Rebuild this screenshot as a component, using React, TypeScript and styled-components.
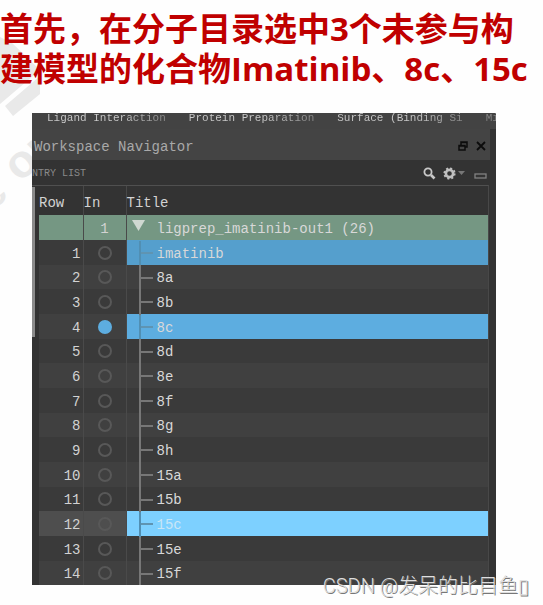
import React, { useState } from "react";
import styled, { createGlobalStyle } from "styled-components";

const Global = createGlobalStyle`
  * { box-sizing: border-box; }
  body { margin: 0; background: #fefefe; }
`;

const mono = `"Liberation Mono", monospace`;

const Page = styled.main`
  position: relative;
  min-height: 100vh;
  overflow: hidden;
`;

const Heading = styled.h1`
  position: relative;
  margin: 0;
  padding: 9px 0 24px;
  font: 700 33px/40px "Open Sans", "Noto Sans CJK SC", sans-serif;
  color: #c00000;
  white-space: nowrap;
`;

const Backdrop = styled.svg`
  position: absolute;
  left: 0;
  top: 0;
  fill: #e9e9e9;
`;

const Panel = styled.section`
  position: relative;
  margin: 0 47px 0 32px;
  background: #333;
  font-family: ${mono};
  overflow: hidden;
`;

const ToolStrip = styled.nav`
  display: flex;
  gap: 23px;
  height: 16px;
  padding-left: 15px;
  background: #434343;
  overflow: hidden;
`;

const Tool = styled.button`
  flex: none;
  height: 12px;
  margin-top: -1px;
  padding: 0;
  border: 0;
  background: linear-gradient(90deg, #ccc 60%, #858585);
  background-clip: text;
  color: transparent;
  font: 11px/12px ${mono};
  &:last-child { background: #858585; background-clip: text; }
`;

const TitleBar = styled.header`
  display: flex;
  align-items: center;
  gap: 8px;
  height: 31px;
  margin-right: 6px;
  padding: 2px 4px 0 2px;
  background: #444;
`;

const PanelTitle = styled.h2`
  flex: 1;
  margin: 0;
  padding-top: 2px;
  font: 14px/20px ${mono};
  color: #a9a9a9;
`;

const IconButton = styled.button`
  display: flex;
  padding: 0;
  border: 0;
  background: none;
`;

const ListBar = styled.div`
  display: flex;
  align-items: center;
  gap: 7px;
  height: 25px;
  padding: 2px 9px 0 0;
`;

const ListLabel = styled.h3`
  flex: 1;
  margin: 0;
  font: 10px/16px ${mono};
  color: #8a8a8a;
`;

const ListBody = styled.div`
  position: relative;
  margin-right: 7px;
  padding-left: 7px;
  border-top: 1px solid #505050;
  border-right: 1px solid #484848;
`;

const ScrollThumb = styled.div`
  position: absolute;
  left: 0;
  top: 1px;
  width: 3px;
  height: 150px;
  background: #8b8b8b;
`;

const Table = styled.table`
  width: 100%;
  table-layout: fixed;
  border-collapse: collapse;
  color: #d2d2d2;
  font: 14px/20px ${mono};
`;

const HeadCell = styled.th<{ $width?: number }>`
  width: ${(p) => (p.$width ? `${p.$width}px` : "auto")};
  height: 29px;
  padding: 4px 0 0;
  border-left: 1px solid #484848;
  font-weight: 400;
  text-align: left;
  &:first-child { border-left: 0; }
`;

type Tone = "group" | "soft" | "picked" | "current" | "plain";
const titleFill: Record<Tone, string> = {
  group: "#759783",
  soft: "#559fcd",
  picked: "#5dade0",
  current: "#7dd0ff",
  plain: "transparent",
};

const rowFill = (tone: Tone, base: string) =>
  tone === "group" ? "#759783" : tone === "current" ? "#4e4e4e" : base;

const Row = styled.tr<{ $tone: Tone }>`
  height: 25px;
  background: ${(p) => rowFill(p.$tone, "#3a3a3a")};
  &:nth-child(3n) { height: 24px; }
  &:nth-child(odd) { background: ${(p) => rowFill(p.$tone, "#404040")}; }
`;

const Cell = styled.td`
  padding: 0;
  border-left: 1px solid #4a4a4a;
  &:first-child { border-left: 0; }
`;

const NumberCell = styled(Cell)`
  padding: 2px 2px 0 0;
  text-align: right;
`;

const MarkCell = styled(Cell)`
  text-align: center;
`;

const Count = styled.span`
  display: block;
  padding-top: 2px;
`;

const TitleCell = styled(Cell)<{ $tone: Tone }>`
  background: ${(p) => titleFill[p.$tone]};
  color: ${(p) => (p.$tone === "current" ? "#c9e6f6" : "#d8d8d8")};
`;

const Entry = styled.div`
  display: flex;
  align-items: center;
  height: 24px;
  white-space: pre;
`;

const Label = styled.span`
  padding-top: 2px;
`;

const Branch = styled.span<{ $dim: boolean }>`
  align-self: flex-start;
  display: flex;
  align-items: center;
  width: 14px;
  height: 25px;
  margin: 0 4px 0 12px;
  border-left: 2px solid ${(p) => (p.$dim ? "#518fb3" : "#777")};
  &::after {
    content: "";
    flex: 1;
    height: 2px;
    background: ${(p) => (p.$dim ? "#5f94b2" : "#777")};
  }
`;

const Toggle = styled.button`
  display: flex;
  width: 24px;
  margin: 0 1px 4px 5px;
  padding: 0;
  border: 0;
  background: none;
`;

const Include = styled.input`
  appearance: none;
  display: block;
  width: 14px;
  height: 14px;
  margin: 0 auto;
  border: 2px solid #585858;
  border-radius: 50%;
  &:checked { background: #5dade0; border-color: #5dade0; }
`;

const Credit = styled.p`
  position: absolute;
  right: 14px;
  top: 574px;
  margin: 0;
  font: 300 20px/24px Roboto, "Noto Sans CJK SC", sans-serif;
  color: #dedede;
  text-shadow: 1px 1px 0 #777;
  white-space: nowrap;
`;

const tools = ["Ligand Interaction", "Protein Preparation", "Surface (Binding Si", "Mi"];
const entries: { name: string; tone: Tone }[] = [
  "imatinib", "8a", "8b", "8c", "8d", "8e", "8f", "8g", "8h", "15a", "15b", "15c", "15e", "15f",
].map((name) => ({
  name,
  tone: name === "imatinib" ? "soft" : name === "8c" ? "picked" : name === "15c" ? "current" : "plain",
}));

export default function App() {
  const [included, setIncluded] = useState("8c");
  return (
    <Page>
      <Global />
      <Backdrop width="110" height="230" aria-hidden="true">
        <path d="M0 37L12 43L40 70L0 104ZM5 106L40 76V94L13 116Z" />
        <text transform="translate(20 183) rotate(-42)" fontFamily="Liberation Sans" fontWeight="700" fontSize="46">om</text>
        <text transform="translate(-7 211) rotate(-42)" fontFamily="Liberation Sans" fontWeight="700" fontSize="40">c</text>
      </Backdrop>
      <Heading>首先，在分子目录选中3个未参与构<br />建模型的化合物Imatinib、8c、15c</Heading>
      <Panel>
        <ToolStrip>{tools.map((t) => <Tool key={t}>{t}</Tool>)}</ToolStrip>
        <TitleBar>
          <PanelTitle>Workspace Navigator</PanelTitle>
          <IconButton aria-label="Float panel">
            <svg width="10" height="10" fill="none" stroke="#0c0c0c" strokeWidth="1.5">
              <path d="M3 4V1H9V6H7M3 1.5H9M1 4.5H7V9H1ZM1 5H7" />
            </svg>
          </IconButton>
          <IconButton aria-label="Close panel">
            <svg width="10" height="10" stroke="#0c0c0c" strokeWidth="1.8"><path d="M1 1L9 9M9 1L1 9" /></svg>
          </IconButton>
        </TitleBar>
        <ListBar>
          <ListLabel>NTRY LIST</ListLabel>
          <IconButton aria-label="Search">
            <svg width="13" height="13" fill="none" stroke="#c8c8c8">
              <circle cx="5" cy="5" r="3.6" strokeWidth="1.8" /><path d="M8 8L11.5 11.5" strokeWidth="2.6" />
            </svg>
          </IconButton>
          <IconButton aria-label="Settings">
            <svg width="24" height="13" fill="none">
              <circle cx="6.5" cy="6.5" r="3.6" stroke="#c0c0c0" strokeWidth="2.6" />
              <circle cx="6.5" cy="6.5" r="5.3" stroke="#c0c0c0" strokeWidth="1.6" strokeDasharray="2.1 2.06" />
              <path d="M15 4L18.5 8L22 4Z" fill="#777" />
            </svg>
          </IconButton>
          <IconButton aria-label="Minimise list">
            <svg width="13" height="13" fill="none" stroke="#828282"><rect x="1" y="7" width="11" height="4" strokeWidth="1.3" /></svg>
          </IconButton>
        </ListBar>
        <ListBody>
          <ScrollThumb />
          <Table>
            <thead>
              <tr>
                <HeadCell $width={44}>Row</HeadCell>
                <HeadCell $width={43}>In</HeadCell>
                <HeadCell>Title</HeadCell>
              </tr>
            </thead>
            <tbody>
              <Row $tone="group">
                <NumberCell />
                <MarkCell><Count>1</Count></MarkCell>
                <TitleCell $tone="group">
                  <Entry>
                    <Toggle aria-label="Collapse group">
                      <svg width="13" height="11"><path d="M0 0H13L6.5 11Z" fill="#cfd8d1" /></svg>
                    </Toggle>
                    <Label>ligprep_imatinib-out1 (26)</Label>
                  </Entry>
                </TitleCell>
              </Row>
              {entries.map(({ name, tone }, i) => (
                <Row key={name} $tone={tone}>
                  <NumberCell>{i + 1}</NumberCell>
                  <MarkCell>
                    <Include type="radio" name="in" aria-label={`Include ${name}`} checked={included === name} onChange={() => setIncluded(name)} />
                  </MarkCell>
                  <TitleCell $tone={tone}>
                    <Entry><Branch $dim={tone !== "plain"} /><Label>{name}</Label></Entry>
                  </TitleCell>
                </Row>
              ))}
            </tbody>
          </Table>
        </ListBody>
      </Panel>
      <Credit>CSDN @发呆的比目鱼▯</Credit>
    </Page>
  );
}
